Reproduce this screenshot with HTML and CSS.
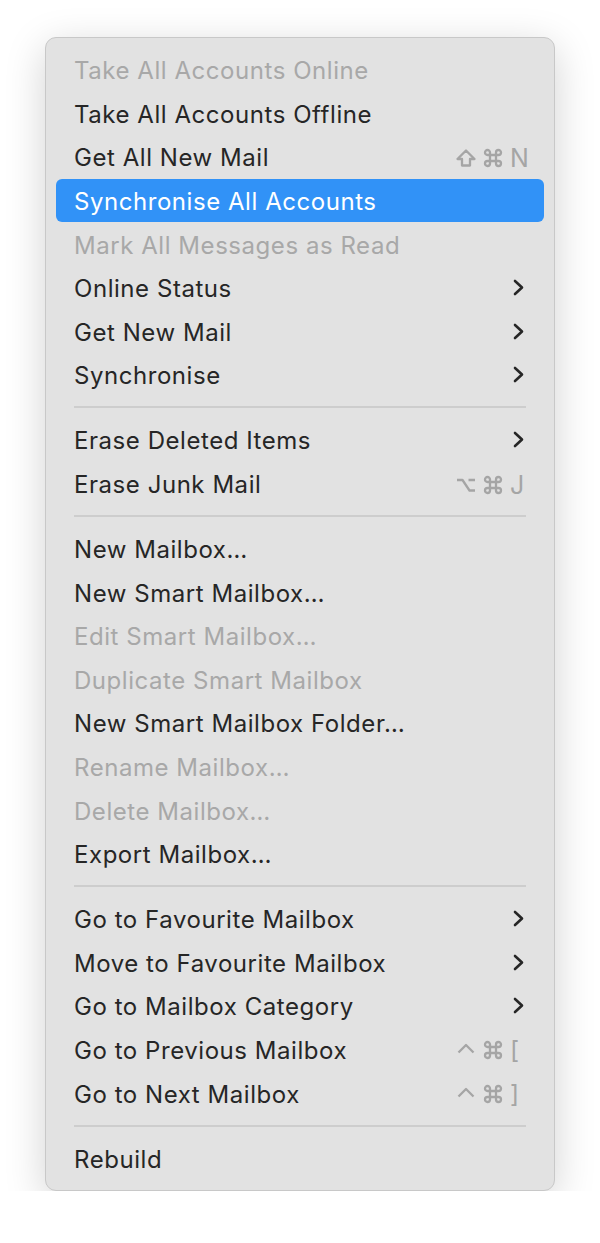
FILE: index.html
```html
<!DOCTYPE html>
<html lang="en">
<head>
    <meta charset="UTF-8">
    <meta name="viewport" content="width=device-width, initial-scale=1.0">
    <title>Mailbox Menu</title>
    <link rel="stylesheet" href="styles.css">
</head>
<body>
    <div class="menu">
        <div class="item disabled"><span class="label">Take All Accounts Online</span></div>
        <div class="item"><span class="label">Take All Accounts Offline</span></div>
        <div class="item">
            <span class="label">Get All New Mail</span>
            <span class="keys">
                <svg class="mod" viewBox="0 0 22 20"><path d="M11 2.5 L19.5 11 H15 V17.5 H7 V11 H2.5 Z"/></svg>
                <svg class="cmd" viewBox="0 0 20 20"><path d="M7 7 H4.5 A2.5 2.5 0 1 1 7 4.5 V15.5 A2.5 2.5 0 1 1 4.5 13 H15.5 A2.5 2.5 0 1 1 13 15.5 V4.5 A2.5 2.5 0 1 1 15.5 7 Z"/></svg>
                <span class="key">N</span>
            </span>
        </div>
        <div class="item selected"><span class="label">Synchronise All Accounts</span></div>
        <div class="item disabled"><span class="label">Mark All Messages as Read</span></div>
        <div class="item">
            <span class="label">Online Status</span>
            <svg class="chevron" viewBox="0 0 11 17"><path d="M2 2 L9 8.5 L2 15"/></svg>
        </div>
        <div class="item">
            <span class="label">Get New Mail</span>
            <svg class="chevron" viewBox="0 0 11 17"><path d="M2 2 L9 8.5 L2 15"/></svg>
        </div>
        <div class="item">
            <span class="label">Synchronise</span>
            <svg class="chevron" viewBox="0 0 11 17"><path d="M2 2 L9 8.5 L2 15"/></svg>
        </div>

        <div class="separator"></div>

        <div class="item">
            <span class="label">Erase Deleted Items</span>
            <svg class="chevron" viewBox="0 0 11 17"><path d="M2 2 L9 8.5 L2 15"/></svg>
        </div>
        <div class="item">
            <span class="label">Erase Junk Mail</span>
            <span class="keys">
                <svg class="mod" viewBox="0 0 22 20"><path d="M2 5 H7.5 L14.5 15.5 H20 M13.5 5 H20"/></svg>
                <svg class="cmd" viewBox="0 0 20 20"><path d="M7 7 H4.5 A2.5 2.5 0 1 1 7 4.5 V15.5 A2.5 2.5 0 1 1 4.5 13 H15.5 A2.5 2.5 0 1 1 13 15.5 V4.5 A2.5 2.5 0 1 1 15.5 7 Z"/></svg>
                <span class="key">J</span>
            </span>
        </div>

        <div class="separator"></div>

        <div class="item"><span class="label">New Mailbox…</span></div>
        <div class="item"><span class="label">New Smart Mailbox…</span></div>
        <div class="item disabled"><span class="label">Edit Smart Mailbox…</span></div>
        <div class="item disabled"><span class="label">Duplicate Smart Mailbox</span></div>
        <div class="item"><span class="label">New Smart Mailbox Folder…</span></div>
        <div class="item disabled"><span class="label">Rename Mailbox…</span></div>
        <div class="item disabled"><span class="label">Delete Mailbox…</span></div>
        <div class="item"><span class="label">Export Mailbox…</span></div>

        <div class="separator"></div>

        <div class="item">
            <span class="label">Go to Favourite Mailbox</span>
            <svg class="chevron" viewBox="0 0 11 17"><path d="M2 2 L9 8.5 L2 15"/></svg>
        </div>
        <div class="item">
            <span class="label">Move to Favourite Mailbox</span>
            <svg class="chevron" viewBox="0 0 11 17"><path d="M2 2 L9 8.5 L2 15"/></svg>
        </div>
        <div class="item">
            <span class="label">Go to Mailbox Category</span>
            <svg class="chevron" viewBox="0 0 11 17"><path d="M2 2 L9 8.5 L2 15"/></svg>
        </div>
        <div class="item">
            <span class="label">Go to Previous Mailbox</span>
            <span class="keys">
                <svg class="mod" viewBox="0 0 22 20"><path d="M3.5 12.5 L11 5 L18.5 12.5"/></svg>
                <svg class="cmd" viewBox="0 0 20 20"><path d="M7 7 H4.5 A2.5 2.5 0 1 1 7 4.5 V15.5 A2.5 2.5 0 1 1 4.5 13 H15.5 A2.5 2.5 0 1 1 13 15.5 V4.5 A2.5 2.5 0 1 1 15.5 7 Z"/></svg>
                <span class="key">[</span>
            </span>
        </div>
        <div class="item">
            <span class="label">Go to Next Mailbox</span>
            <span class="keys">
                <svg class="mod" viewBox="0 0 22 20"><path d="M3.5 12.5 L11 5 L18.5 12.5"/></svg>
                <svg class="cmd" viewBox="0 0 20 20"><path d="M7 7 H4.5 A2.5 2.5 0 1 1 7 4.5 V15.5 A2.5 2.5 0 1 1 4.5 13 H15.5 A2.5 2.5 0 1 1 13 15.5 V4.5 A2.5 2.5 0 1 1 15.5 7 Z"/></svg>
                <span class="key">]</span>
            </span>
        </div>

        <div class="separator"></div>

        <div class="item"><span class="label">Rebuild</span></div>
    </div>
</body>
</html>
```

FILE: styles.css
```css
body {
    margin: 0;
    background: #fff;
    font-family: Inter, "Noto Sans", sans-serif;
    color: #262626;
}

.menu {
    width: 510px;
    box-sizing: border-box;
    margin: 37px 0 0 45px;
    padding: 10px 10px 10px;
    background: #e2e2e2;
    border: 1px solid #c8c8c8;
    border-radius: 11px;
    box-shadow: 0 10px 40px rgba(0, 0, 0, 0.18);
}

.item {
    height: 43.6px;
    box-sizing: border-box;
    display: flex;
    align-items: center;
    justify-content: space-between;
    padding: 2px 16px 0 18px;
    border-radius: 6px;
    font-size: 24px;
    letter-spacing: 0.55px;
}

.item.disabled {
    color: #a8a8a8;
}

.item.selected {
    background: #3192f7;
    color: #fff;
}

.chevron {
    width: 11px;
    height: 17px;
    margin-right: 4px;
    margin-top: -2px;
}

.chevron path {
    fill: none;
    stroke: #262626;
    stroke-width: 2.6;
    stroke-linecap: round;
    stroke-linejoin: round;
}

.keys {
    display: flex;
    align-items: center;
    color: #a5a5a5;
}

.keys svg path {
    fill: none;
    stroke: #a5a5a5;
    stroke-width: 2.3;
    stroke-linejoin: round;
}

.keys .mod {
    width: 22px;
    height: 20px;
    margin-right: 6px;
}

.keys .cmd {
    width: 20px;
    height: 20px;
    margin-right: 7px;
}

.keys .key {
    width: 18px;
    font-size: 25px;
    letter-spacing: 0;
}

.separator {
    height: 21.4px;
    display: flex;
    align-items: center;
    padding: 0 18px;
}

.separator::after {
    content: "";
    flex: 1;
    height: 2px;
    background: #cdcdcd;
}
```
